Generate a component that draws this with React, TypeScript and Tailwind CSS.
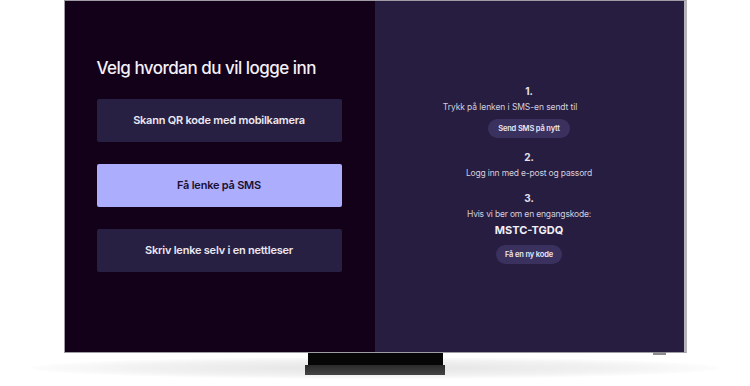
import React from "react";

export default function App() {
  const font = { fontFamily: "Inter, 'Noto Sans', sans-serif" };
  return (
    <div className="relative w-[750px] h-[386px] bg-white overflow-hidden" style={font}>
      {/* floor shadow */}
      <div className="absolute left-[30px] top-[357px] w-[690px] h-[22px] rounded-[50%] bg-[radial-gradient(ellipse_at_center,rgba(0,0,0,0.11)_0%,rgba(0,0,0,0.05)_50%,rgba(0,0,0,0)_75%)]" />
      <div className="relative flex flex-col items-center">
        {/* screen */}
        <div className="flex w-[623px] h-[353px] border border-[#a09ca6] border-r-[3px] border-r-[#b5b3b8]">
          {/* left */}
          <div className="w-[310px] h-full bg-[#130019] pl-[32px] pt-[56px]">
            <h1 className="text-[17px] leading-[22px] font-medium text-[#f3f1f6] tracking-[-0.03em]">
              Velg hvordan du vil logge inn
            </h1>
            <div className="mt-[20px] flex flex-col gap-[22px] w-[245px]">
              <div className="h-[43px] rounded-[2px] bg-[#272043] flex items-center justify-center text-[11px] font-semibold text-[#ebe8f2] tracking-[-0.02em]">
                Skann QR kode med mobilkamera
              </div>
              <div className="h-[43px] rounded-[2px] bg-[#adadfd] flex items-center justify-center text-[11px] font-semibold text-[#1a1030] tracking-[-0.02em]">
                Få lenke på SMS
              </div>
              <div className="h-[43px] rounded-[2px] bg-[#272043] flex items-center justify-center text-[11px] font-semibold text-[#ebe8f2] tracking-[-0.02em]">
                Skriv lenke selv i en nettleser
              </div>
            </div>
          </div>
          {/* right */}
          <div className="flex-1 h-full bg-[#261d41] flex flex-col items-center pt-[83px] text-[#e6e3ee]">
            <div className="h-[14px] leading-[14px] text-[10px] font-bold">1.</div>
            <div className="mt-[3px] h-[12px] leading-[12px] text-[8.5px] text-[#d3cfdd] tracking-[-0.01em] flex">
              <span>Trykk på lenken i SMS-en sendt til</span>
              <span className="inline-block w-[38px]" />
            </div>
            <div className="mt-[6px] h-[19px] px-[10px] rounded-full bg-[#3b315f] flex items-center text-[7.5px] font-semibold text-[#ebe8f2] tracking-[-0.02em]">
              Send SMS på nytt
            </div>
            <div className="mt-[12px] h-[14px] leading-[14px] text-[10px] font-bold">2.</div>
            <div className="mt-[3px] h-[12px] leading-[12px] text-[8.5px] text-[#d3cfdd] tracking-[-0.02em]">
              Logg inn med e-post og passord
            </div>
            <div className="mt-[12px] h-[14px] leading-[14px] text-[10px] font-bold">3.</div>
            <div className="mt-[3px] h-[12px] leading-[12px] text-[8.5px] text-[#d3cfdd] tracking-[-0.02em]">
              Hvis vi ber om en engangskode:
            </div>
            <div className="mt-[3px] h-[14px] leading-[14px] text-[11px] font-bold text-[#f1eff5]">
              MSTC-TGDQ
            </div>
            <div className="mt-[8px] h-[19px] px-[9px] rounded-full bg-[#3b315f] flex items-center text-[7.5px] font-semibold text-[#ebe8f2] tracking-[-0.02em]">
              Få en ny kode
            </div>
          </div>
        </div>
        {/* sensor nub */}
        <div className="absolute left-[653px] top-[352px] w-[13px] h-[3px] bg-[#8d8a90]" />
        {/* stand */}
        <div className="w-[135px] h-[12px] bg-[#060606]" />
        <div className="w-[140px] h-[10px] bg-[linear-gradient(to_bottom,#2a2a2a,#454545)]" />
      </div>
    </div>
  );
}
